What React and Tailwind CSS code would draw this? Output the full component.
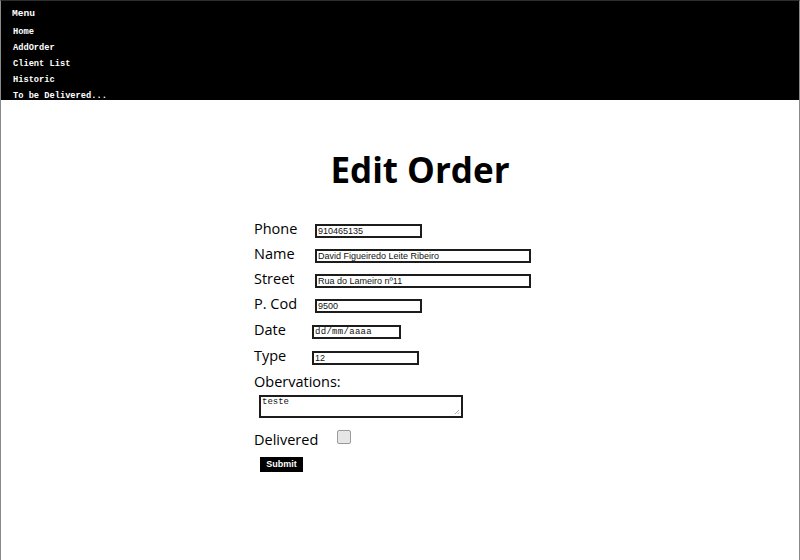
const MENU = ["Home", "AddOrder", "Client List", "Historic", "To be Delivered..."];

const FIELDS = [
  { label: "Phone", value: "910465135", labelW: "w-[61px]", inputW: "w-[107px]" },
  { label: "Name", value: "David Figueiredo Leite Ribeiro", labelW: "w-[61px]", inputW: "w-[216px]" },
  { label: "Street", value: "Rua do Lameiro nº11", labelW: "w-[61px]", inputW: "w-[216px]" },
  { label: "P. Cod", value: "9500", labelW: "w-[61px]", inputW: "w-[107px]" },
];

const SEGOE = { fontFamily: '"Open Sans", "Noto Sans", sans-serif' };

function Field({ label, value, labelW, inputW, mono }) {
  return (
    <div className="flex h-[25px] items-center">
      <span className={`${labelW} -mt-[3px] text-[14.5px] leading-none text-black`}>{label}</span>
      <div
        className={`${inputW} flex h-[14px] items-center border-2 border-[#1c1c1c] bg-white pl-[1px] pt-[1px] text-[9px] leading-none text-[#111] ${
          mono ? "font-['Liberation_Mono',monospace] tracking-[0.3px]" : "font-['Liberation_Sans',Arial,sans-serif]"
        }`}
      >
        {value}
      </div>
    </div>
  );
}

export default function App() {
  return (
    <div className="min-h-[560px] w-[800px] border-x border-t border-x-[#8a8a8a] border-t-[#2e2e2e] bg-white">
      <nav className="h-[99px] bg-black pl-[11px] pt-[6px] font-['Liberation_Mono',monospace] font-bold text-white">
        <div className="h-[16px] text-[9.6px] leading-[14px]">Menu</div>
        <ul className="pl-[1px]">
          {MENU.map((item) => (
            <li key={item} className="h-[16px] text-[8.7px] leading-[19px]">
              {item}
            </li>
          ))}
        </ul>
      </nav>

      <main style={SEGOE} className="pt-[46px]">
        <h1 className="pl-[40px] text-center text-[35px] font-bold leading-[48px] text-black">
          Edit Order
        </h1>

        <form className="pl-[253px] pt-[24px]">
          {FIELDS.map((f) => (
            <Field key={f.label} {...f} />
          ))}
          <div className="h-[1px]" />
          <Field label="Date" value="dd/mm/aaaa" labelW="w-[58px]" inputW="w-[89px]" mono />
          <div className="h-[1px]" />
          <Field label="Type" value="12" labelW="w-[58px]" inputW="w-[107px]" />

          <div className="pt-[2px] text-[14.5px] leading-[20px] text-black">Obervations:</div>
          <div className="pl-[5px] pt-[3px]">
            <div className="relative h-[23px] w-[204px] border-2 border-[#1c1c1c] bg-white px-[1px] font-['Liberation_Mono',monospace] text-[9px] leading-[11px] text-[#111]">
              teste
              <svg className="absolute bottom-[1px] right-[1px]" width="6" height="6" viewBox="0 0 6 6">
                <path d="M5 1 L1 5 M5 3.5 L3.5 5" stroke="#999" strokeWidth="0.8" />
              </svg>
            </div>
          </div>

          <div className="mt-[12px] flex h-[20px] items-start">
            <span className="w-[83px] text-[14.5px] leading-[20px] text-black">Delivered</span>
            <div className="h-[14px] w-[14px] rounded-[2px] border border-[#9a9a9a] bg-[#e6e6e6]" />
          </div>

          <div className="pl-[6px] pt-[7px]">
            <button
              type="button"
              className="block h-[15px] w-[43px] bg-black font-['Liberation_Sans',Arial,sans-serif] text-[9px] font-bold leading-none text-white"
            >
              Submit
            </button>
          </div>
        </form>
      </main>
    </div>
  );
}
